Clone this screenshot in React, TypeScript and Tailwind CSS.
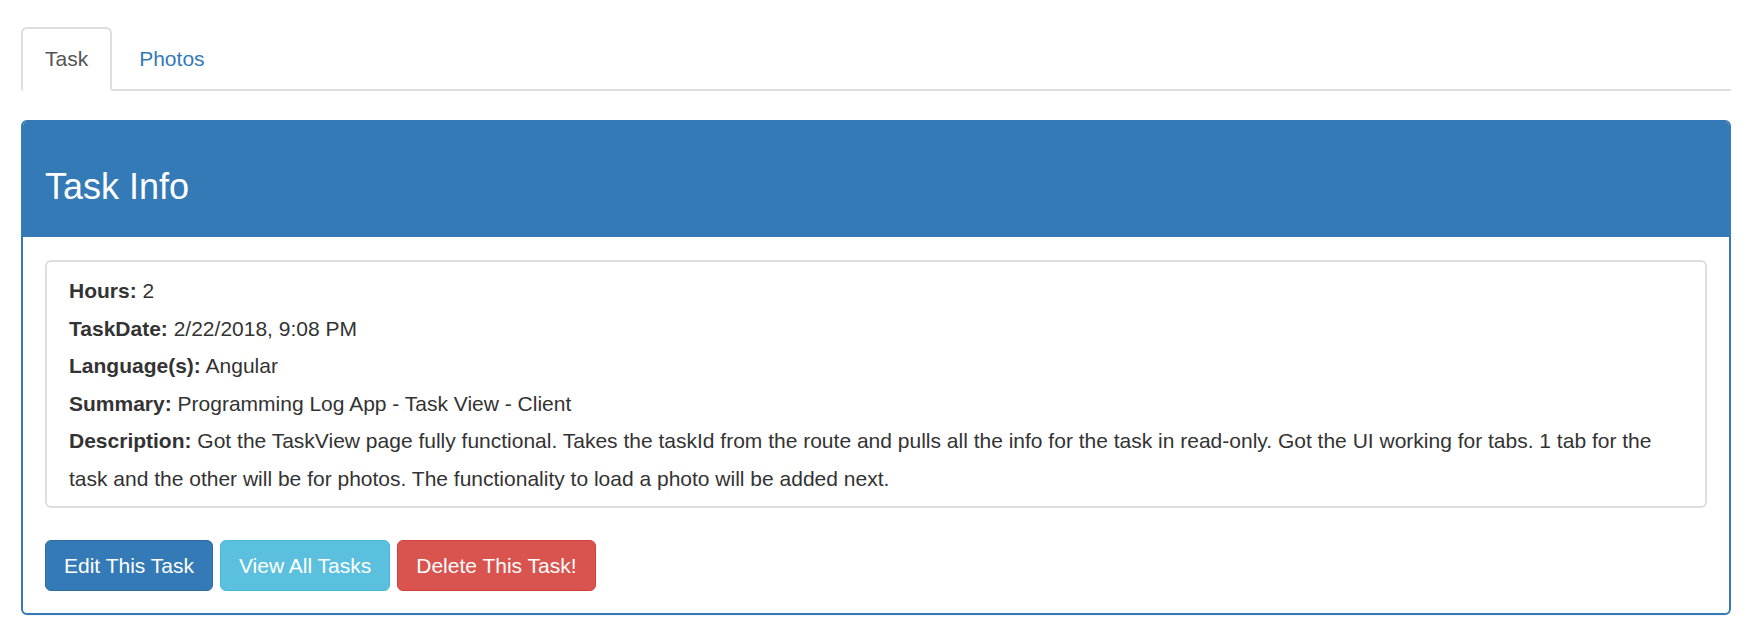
const details = [
  { label: 'Hours:', value: '2' },
  { label: 'TaskDate:', value: '2/22/2018, 9:08 PM' },
  { label: 'Language(s):', value: 'Angular' },
  { label: 'Summary:', value: 'Programming Log App - Task View - Client' },
  {
    label: 'Description:',
    value:
      'Got the TaskView page fully functional. Takes the taskId from the route and pulls all the info for the task in read-only. Got the UI working for tabs. 1 tab for the task and the other will be for photos. The functionality to load a photo will be added next.',
  },
];

export default function App() {
  return (
    <div className="min-h-screen bg-white pt-[27px] pl-[21px] pr-[29px] font-['Liberation_Sans',Arial,sans-serif] text-[21px] text-[#333]">
      {/* tabs */}
      <div className="flex border-b-2 border-[#ddd]">
        <div className="-mb-[2px] rounded-t-[6px] border-2 border-[#ddd] border-b-transparent bg-white px-[22px] py-[15px] leading-[30px] text-[#555]">
          Task
        </div>
        <div className="-mb-[2px] ml-[3px] border-2 border-transparent px-[22px] py-[15px] leading-[30px] text-[#337ab7]">
          Photos
        </div>
      </div>

      {/* panel */}
      <div className="mt-[29px] overflow-hidden rounded-[6px] border-2 border-[#337ab7] bg-white shadow-[0_1px_1px_rgba(0,0,0,0.05)]">
        <div className="bg-[#337ab7] px-[22px] pt-[45px] pb-[30px]">
          <h3 className="text-[36px] leading-[40px] text-white">Task Info</h3>
        </div>
        <div className="px-[22px] pt-[23px] pb-[22px]">
          <div className="rounded-[6px] border-2 border-[#ddd] pt-[10px] pb-[9px] pl-[22px] pr-[22px] leading-[37.5px]">
            {details.map((d) => (
              <p key={d.label}>
                <b>{d.label}</b> {d.value}
              </p>
            ))}
          </div>
          <div className="mt-[32px] flex gap-[7px] text-white">
            <button className="rounded-[6px] border border-[#2e6da4] bg-[#337ab7] px-[18px] py-[9px] leading-[31px]">
              Edit This Task
            </button>
            <button className="rounded-[6px] border border-[#46b8da] bg-[#5bc0de] px-[18px] py-[9px] leading-[31px]">
              View All Tasks
            </button>
            <button className="rounded-[6px] border border-[#d43f3a] bg-[#d9534f] px-[18px] py-[9px] leading-[31px]">
              Delete This Task!
            </button>
          </div>
        </div>
      </div>
    </div>
  );
}
